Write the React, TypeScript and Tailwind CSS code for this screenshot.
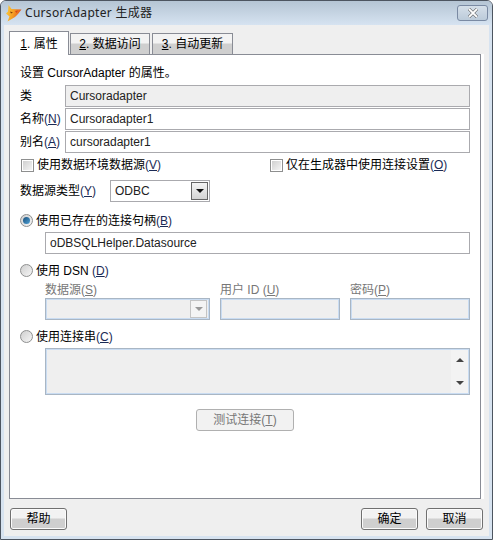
const font = '[font-family:"Liberation_Sans","Noto_Sans_CJK_SC",sans-serif]'
const titleFont = '[font-family:"Noto_Sans","Noto_Sans_CJK_SC",sans-serif]'

const Hot = ({ c, gray }: { c: string; gray?: boolean }) => (
  <span className={gray ? 'text-[#777]' : 'text-[#1a2a55]'}>
    (<span className="underline underline-offset-1">{c}</span>)
  </span>
)

const Label = ({ children, className = '' }: { children: React.ReactNode; className?: string }) => (
  <span className={`text-[12px] leading-[16px] whitespace-nowrap ${className}`}>{children}</span>
)

const Field = ({ value, disabled, className = '' }: { value: string; disabled?: boolean; className?: string }) => (
  <div
    className={`h-[22px] flex items-center border border-[#aaaaae] pl-[4px] text-[12px] text-[#222] ${
      disabled ? 'bg-[#efefef]' : 'bg-white'
    } ${className}`}
  >
    {value}
  </div>
)

const DisabledBox = ({ className = '', children }: { className?: string; children?: React.ReactNode }) => (
  <div className={`border border-[#a9b6c4] bg-[#efefef] shadow-[inset_0_0_0_1px_#c9dcf2] ${className}`}>{children}</div>
)

const Row = ({ label, value, disabled }: { label: React.ReactNode; value: string; disabled?: boolean }) => (
  <div className="flex items-center h-[22px]">
    <Label className="w-[45px]">{label}</Label>
    <Field value={value} disabled={disabled} className="flex-1" />
  </div>
)

const Checkbox = () => (
  <span className="w-[13px] h-[13px] border border-[#8e8f8f] bg-white p-[1px] shrink-0">
    <span className="block w-full h-full bg-gradient-to-br from-[#d0d0d0] to-[#f4f4f4]" />
  </span>
)

const Radio = ({ on }: { on?: boolean }) => (
  <span className="w-[13px] h-[13px] rounded-full border border-[#8e8f8f] bg-gradient-to-br from-[#cfcfcf] to-[#f6f6f6] shrink-0 flex items-center justify-center">
    {on && <span className="w-[7px] h-[7px] rounded-full bg-gradient-to-br from-[#1c4f7a] to-[#4fa3d8]" />}
  </span>
)

const Arrow = ({ color, up }: { color: string; up?: boolean }) => (
  <svg width="8" height="4" viewBox="0 0 8 4" className={up ? 'rotate-180' : ''}>
    <path d="M0 0h8L4 4z" fill={color} />
  </svg>
)

const Tab = ({ num, text, active, className = '' }: { num: string; text: string; active?: boolean; className?: string }) => (
  <div
    className={`flex items-center justify-center text-[12px] border border-[#898c95] border-b-0 ${
      active
        ? 'h-[24px] bg-white relative z-10'
        : 'h-[21px] mb-[1px] bg-gradient-to-b from-[#f3f3f3] from-45% to-[#cfcfcf] to-50% border-b border-b-[#898c95]'
    } ${className}`}
  >
    <span className="underline underline-offset-1">{num}</span>. {text}
  </div>
)

const PushButton = ({ text, className = '' }: { text: string; className?: string }) => (
  <button className={`h-[22px] w-[57px] rounded-[3px] border border-[#707070] bg-gradient-to-b from-[#f2f2f2] from-45% to-[#cfcfcf] to-50% shadow-[inset_0_0_0_1px_#fbfbfb] text-[12px] text-black ${className}`}>
    {text}
  </button>
)

const Fox = () => (
  <svg width="16" height="17" viewBox="0 0 16 17" className="shrink-0">
    <defs>
      <linearGradient id="fox" x1="0" y1="0" x2="1" y2="0.3">
        <stop offset="0" stopColor="#fbd040" />
        <stop offset="0.55" stopColor="#f5a023" />
        <stop offset="1" stopColor="#e2561c" />
      </linearGradient>
    </defs>
    <path d="M2.5 0 5.5 4 15.5 4.5 12 9 9 12 1.5 16.5 3.5 11.5 0 8.5 2 6.5z" fill="url(#fox)" />
    <path d="M4 6.5 7 7.5 5 8.5z" fill="#7a3a08" />
    <path d="M9 6 12 5.5 10.5 8z" fill="#d8481a" />
  </svg>
)

export default function App() {
  return (
    <div className={`${font} w-[493px] h-[540px] flex flex-col rounded-t-[6px] border border-[#4d5560] bg-[#d7e3f0] overflow-hidden text-black`}>
      {/* title bar */}
      <div className="h-[24px] shrink-0 flex items-center pl-[5px] pr-[4px] bg-gradient-to-b from-[#b5c5d4] to-[#d6e3f1]">
        <Fox />
        <span className={`${titleFont} ml-[3px] text-[12px] text-[#222] tracking-[0.3px]`}>CursorAdapter 生成器</span>
        <div className="ml-auto w-[31px] h-[16px] rounded-[3px] border border-[#7a8aa3] bg-gradient-to-b from-[#d5dfe9] to-[#bccbda] flex items-center justify-center">
          <svg width="12" height="10" viewBox="0 0 12 10">
            <path d="M2 1 10 9M10 1 2 9" fill="none" stroke="#555" strokeWidth="3" />
            <path d="M2 1 10 9M10 1 2 9" fill="none" stroke="#fff" strokeWidth="1.8" />
          </svg>
        </div>
      </div>

      {/* dialog body */}
      <div className="flex-1 mx-[3px] mb-[3px] bg-[#efefef] flex flex-col pl-[5px] pr-[5px] pt-[6px]">
        <div className="flex items-end h-[24px] -mb-px">
          <Tab num="1" text="属性" active className="w-[60px]" />
          <Tab num="2" text="数据访问" className="w-[80px] ml-[1px]" />
          <Tab num="3" text="自动更新" className="w-[81px] ml-[2px]" />
        </div>

        <div className="w-[475px] h-[445px] bg-white border-r-[3px] border-r-white shrink-0">
          <div className="h-full border border-[#898c95] px-[10px] pt-[10px] flex flex-col">
            <Label>设置 CursorAdapter 的属性。</Label>

            <div className="mt-[4px] flex flex-col gap-[1px]">
              <Row label="类" value="Cursoradapter" disabled />
              <Row label={<>名称<Hot c="N" /></>} value="Cursoradapter1" />
              <Row label={<>别名<Hot c="A" /></>} value="cursoradapter1" />
            </div>

            <div className="mt-[5px] flex items-center h-[14px] pl-[1px]">
              <span className="w-[249px] flex items-center">
                <Checkbox />
                <Label className="ml-[3px]">使用数据环境数据源<Hot c="V" /></Label>
              </span>
              <Checkbox />
              <Label className="ml-[3px]">仅在生成器中使用连接设置<Hot c="O" /></Label>
            </div>

            <div className="mt-[8px] flex items-center h-[22px]">
              <Label className="w-[90px]">数据源类型<Hot c="Y" /></Label>
              <div className="w-[100px] h-[22px] border border-[#aaaaae] flex items-center pl-[4px] pr-[1px] text-[12px] text-[#222]">
                ODBC
                <span className="ml-auto w-[17px] h-[18px] border border-[#666] bg-gradient-to-b from-[#f4f4f4] to-[#d4d4d4] flex items-center justify-center">
                  <Arrow color="#111" />
                </span>
              </div>
            </div>

            <div className="mt-[12px] flex items-center h-[13px]">
              <Radio on />
              <Label className="ml-[3px]">使用已存在的连接句柄<Hot c="B" /></Label>
            </div>
            <Field value="oDBSQLHelper.Datasource" className="mt-[5px] ml-[25px]" />

            <div className="mt-[10px] flex items-center h-[13px]">
              <Radio />
              <Label className="ml-[3px]">使用 DSN <Hot c="D" /></Label>
            </div>

            <div className="mt-[5px] ml-[25px] flex gap-[10px]">
              <div className="w-[165px] flex flex-col">
                <Label className="text-[#777]">数据源<Hot c="S" gray /></Label>
                <DisabledBox className="h-[22px] flex items-center justify-end pr-[2px]">
                  <span className="w-[17px] h-[18px] border border-[#c4c4c4] bg-[#f4f4f4] flex items-center justify-center">
                    <Arrow color="#999" />
                  </span>
                </DisabledBox>
              </div>
              <div className="w-[120px] flex flex-col">
                <Label className="text-[#777]">用户 ID <Hot c="U" gray /></Label>
                <DisabledBox className="h-[22px]" />
              </div>
              <div className="w-[120px] flex flex-col">
                <Label className="text-[#777]">密码<Hot c="P" gray /></Label>
                <DisabledBox className="h-[22px]" />
              </div>
            </div>

            <div className="mt-[10px] flex items-center h-[13px]">
              <Radio />
              <Label className="ml-[3px]">使用连接串<Hot c="C" /></Label>
            </div>
            <DisabledBox className="mt-[5px] ml-[25px] h-[47px] flex justify-end p-[1px]">
              <div className="w-[17px] bg-[#f3f3f3] flex flex-col items-center justify-between py-[8px]">
                <Arrow color="#444" up />
                <Arrow color="#444" />
              </div>
            </DisabledBox>

            <button className="mt-[14px] self-center h-[22px] w-[98px] rounded-[3px] border border-[#b0b0b0] bg-[#f2f2f2] text-[12px] text-[#777]">
              测试连接<Hot c="T" gray />
            </button>
          </div>
        </div>

        <div className="mt-[9px] flex pl-[1px] pr-[1px]">
          <PushButton text="帮助" />
          <PushButton text="确定" className="ml-auto" />
          <PushButton text="取消" className="ml-[8px]" />
        </div>
      </div>
    </div>
  )
}
